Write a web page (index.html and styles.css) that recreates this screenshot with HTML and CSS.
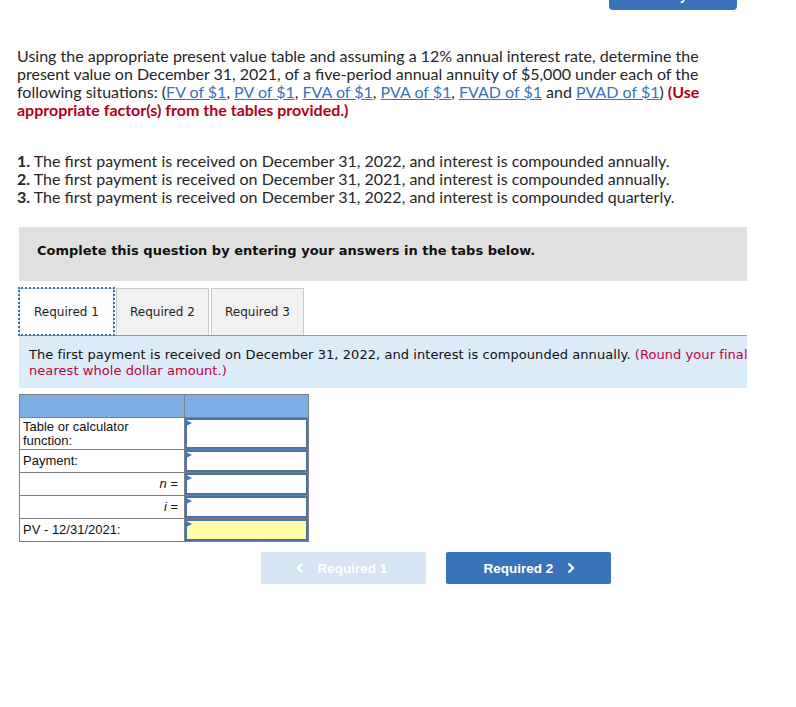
FILE: index.html
```html
<!DOCTYPE html>
<html lang="en">
    <head>
    <meta charset="UTF-8" />
    <meta name="viewport" content="width=device-width, initial-scale=1" />
    <title>Present Value Question</title>
    <link rel="stylesheet" href="styles.css">
    </head>
    <body>
    <div class="top-bar">
        <button class="top-btn">Check my work</button>
    </div>

    <div class="question">
        <p class="prompt">
        Using the appropriate present value table and assuming a 12% annual interest rate, determine the
        present value on December 31, 2021, of a five-period annual annuity of $5,000 under each of the
        following situations: (<a href="#">FV of $1</a>, <a href="#">PV of $1</a>, <a href="#">FVA of $1</a>, <a href="#">PVA of $1</a>, <a href="#">FVAD of $1</a> and <a href="#">PVAD of $1</a>)
        <strong class="note">(Use appropriate factor(s) from the tables provided.)</strong>
        </p>

        <ol class="cases">
        <li><b>1.</b> The first payment is received on December 31, 2022, and interest is compounded annually.</li>
        <li><b>2.</b> The first payment is received on December 31, 2021, and interest is compounded annually.</li>
        <li><b>3.</b> The first payment is received on December 31, 2022, and interest is compounded quarterly.</li>
        </ol>
    </div>

    <div class="panel">
        <div class="panel-head">Complete this question by entering your answers in the tabs below.</div>

        <div class="tabs">
        <button class="tab active">Required 1</button>
        <button class="tab">Required 2</button>
        <button class="tab">Required 3</button>
        </div>

        <div class="tab-info">
        <div class="tab-info-text">
            The first payment is received on December 31, 2022, and interest is compounded annually.
            <span class="hint">(Round your final answer to the nearest whole dollar amount.)</span>
        </div>
        </div>

        <table class="answer">
        <tr class="head"><th></th><th></th></tr>
        <tr>
            <td class="label">Table or calculator function:</td>
            <td class="cell"><div class="field tall"></div></td>
        </tr>
        <tr>
            <td class="label">Payment:</td>
            <td class="cell"><div class="field"></div></td>
        </tr>
        <tr>
            <td class="label right"><i>n</i> =</td>
            <td class="cell"><div class="field"></div></td>
        </tr>
        <tr>
            <td class="label right"><i>i</i> =</td>
            <td class="cell"><div class="field"></div></td>
        </tr>
        <tr>
            <td class="label">PV - 12/31/2021:</td>
            <td class="cell"><div class="field total"></div></td>
        </tr>
        </table>

        <div class="nav">
        <button class="nav-btn prev" disabled>
            <svg class="chev" width="8" height="12" viewBox="0 0 8 12"><path d="M6.5 1.5 2 6l4.5 4.5" fill="none" stroke="currentColor" stroke-width="2.2"/></svg>
            Required 1
        </button>
        <button class="nav-btn next">
            Required 2
            <svg class="chev" width="8" height="12" viewBox="0 0 8 12"><path d="M1.5 1.5 6 6l-4.5 4.5" fill="none" stroke="currentColor" stroke-width="2.2"/></svg>
        </button>
        </div>
    </div>
    </body>
</html>
```

FILE: styles.css
```css
body {
margin: 0;
background: #fff;
color: #262626;
font-family: Lato, "Open Sans", sans-serif;
}
.top-bar {
display: flex;
justify-content: flex-end;
padding-right: 59px;
height: 10px;
overflow: hidden;
}
.top-btn {
width: 128px;
height: 30px;
margin-top: -20px;
border: none;
border-radius: 4px;
background: #3873b9;
color: #fff;
font-weight: bold;
}
.question {
padding: 0 17px;
font-size: 16px;
line-height: 18px;
}
.prompt {
margin: 37px 0 0;
max-width: 690px;
}
.prompt a {
color: #3873b9;
}
.note {
color: #b0001e;
}
.cases {
list-style: none;
margin: 33px 0 0;
padding: 0;
}
/* panel keeps the Verdana-ish look of the assignment widget */
.panel {
margin: 21px 49px 0 19px;
font-family: "DejaVu Sans", Verdana, sans-serif;
}
.panel-head {
height: 54px;
box-sizing: border-box;
padding: 0 0 8px 18px;
background: #e0e0e0;
display: flex;
align-items: center;
font-size: 13px;
font-weight: bold;
color: #111;
}
.tabs {
display: flex;
gap: 2px;
margin-top: 7px;
}
.tab {
width: 93px;
height: 47px;
padding: 0;
border: 1px solid #c8c8c8;
border-bottom: none;
background: #f2f2f2;
font-family: inherit;
font-size: 12px;
color: #222;
}
.tab.active {
width: 95px;
background: #fff;
outline: 2px dotted #3873b9;
outline-offset: -1px;
}
.tab-info {
border-top: 1px solid #999;
background: #dcebf8;
height: 52px;
overflow: hidden;
}
.tab-info-text {
width: 850px;
padding: 11px 10px 0;
font-size: 13px;
line-height: 16px;
letter-spacing: 0.06px;
color: #111;
}
.hint {
color: #c0003c;
}
.answer {
margin-top: 6px;
border-collapse: collapse;
font-family: "Liberation Sans", Arial, sans-serif;
font-size: 13px;
line-height: 14px;
}
.answer td, .answer th {
border: 1px solid #808080;
padding: 0;
}
.answer .head th {
height: 22px;
background: #7aaee5;
}
.label {
width: 158px;
padding: 1px 3px;
vertical-align: middle;
color: #111;
}
.answer td.label {
padding: 1px 3px;
}
.answer td.label.right {
width: 155px;
padding-right: 6px;
text-align: right;
}
.cell {
width: 123px;
}
.field {
position: relative;
height: 22px;
box-sizing: border-box;
border: 2px solid #4a74a8;
background: #fff;
}
.field.tall {
height: 31px;
}
.field::before {
content: "";
position: absolute;
left: -1px;
top: 0;
border-left: 6px solid #3a78c8;
border-top: 3px solid transparent;
border-bottom: 3px solid transparent;
}
.field.total {
background: #ffffaa;
}
.nav {
display: flex;
gap: 20px;
margin: 10px 0 0 242px;
}
.nav-btn {
display: flex;
align-items: center;
justify-content: center;
gap: 14px;
width: 165px;
height: 32px;
border: none;
border-radius: 2px;
background: #3873b9;
color: #fff;
font-family: "Liberation Sans", Arial, sans-serif;
font-size: 13.5px;
font-weight: bold;
}
.nav-btn.prev {
background: #d7e4f3;
padding-right: 10px;
}
.nav-btn.next {
padding-left: 8px;
}
```
